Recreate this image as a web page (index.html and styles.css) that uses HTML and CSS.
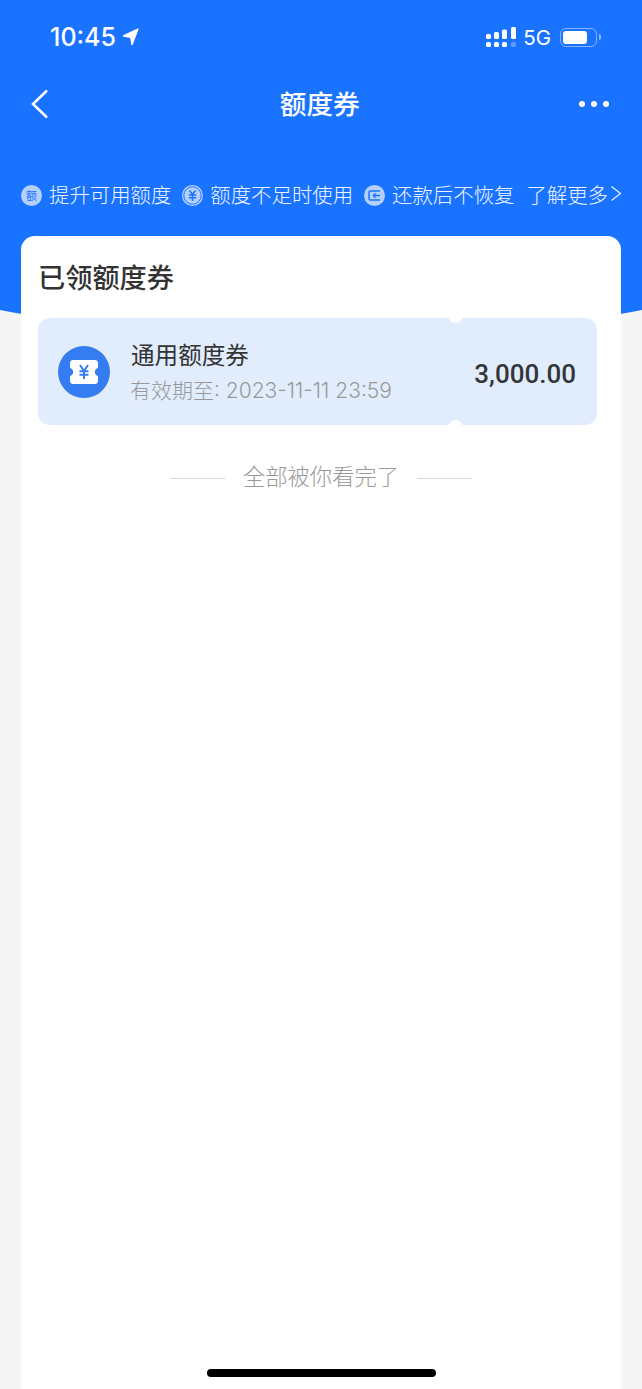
FILE: index.html
```html
<!DOCTYPE html>
<html lang="zh-CN">
<head>
    <meta charset="UTF-8">
    <meta name="viewport" content="width=device-width, initial-scale=1.0">
    <title>额度券</title>
    <link rel="stylesheet" href="styles.css">
</head>
<body>
    <div class="hero-bg"></div>
    <div class="page">
        <!-- Status bar -->
        <div class="status-bar">
            <div class="status-left">
                <span class="time">10:45</span>
                <svg class="loc" width="17" height="18" viewBox="0 0 17 18"><path d="M15.800 1.200 1.500 8 8.800 9.200 10 16.500z" fill="#fff" stroke="#fff" stroke-width="1.500" stroke-linejoin="round"/></svg>
            </div>
            <div class="status-right">
                <svg width="30" height="21" viewBox="0 0 30 21" fill="#fff">
                    <rect x="0" y="7" width="5" height="5" rx="1.500"/>
                    <rect x="8" y="5" width="5" height="7" rx="1.500"/>
                    <rect x="16" y="2.500" width="5" height="9.500" rx="1.500"/>
                    <rect x="25" y="0" width="5" height="12" rx="1.500"/>
                    <rect x="0" y="15" width="5" height="5" rx="1.500"/>
                    <rect x="8" y="15" width="5" height="5" rx="1.500"/>
                    <rect x="16" y="15" width="5" height="5" rx="1.500"/>
                    <rect x="25" y="15" width="5" height="5" rx="1.500" opacity=".3"/>
                </svg>
                <span class="net">5G</span>
                <div class="battery"><div class="battery-fill"></div></div>
                <div class="battery-nub"></div>
            </div>
        </div>

        <!-- Nav -->
        <div class="nav">
            <svg width="20" height="30" viewBox="0 0 20 30"><path d="M17 1.500 3 15l14 13.500" fill="none" stroke="#fff" stroke-width="2.500"/></svg>
            <h1>额度券</h1>
            <div class="dots"><i></i><i></i><i></i></div>
        </div>

        <!-- Tips -->
        <div class="tips">
            <span class="tip-icon tip-icon-text">额</span>
            <span class="tip">提升可用额度</span>
            <svg class="tip-icon" width="21" height="21" viewBox="0 0 21 21">
                <circle cx="10.500" cy="10.500" r="10.500" fill="#b5d1fb"/>
                <circle cx="10.500" cy="10.500" r="8.700" fill="none" stroke="#1a73ff" stroke-width="1"/>
                <path d="m7.500 5.500 3 4 3-4M6.800 10h7.400M6.800 12.700h7.400M10.500 9.500V16" fill="none" stroke="#1a73ff" stroke-width="1.500"/>
            </svg>
            <span class="tip">额度不足时使用</span>
            <svg class="tip-icon" width="21" height="21" viewBox="0 0 21 21">
                <circle cx="10.500" cy="10.500" r="10.500" fill="#b5d1fb"/>
                <path d="M16 6H6.500C5.700 6 5 6.700 5 7.500v6c0 .8.700 1.500 1.500 1.500H16" fill="none" stroke="#1a73ff" stroke-width="1.500"/>
                <path d="M16 10.500H9.500M11.500 8.300l-2.300 2.200 2.300 2.200" fill="none" stroke="#1a73ff" stroke-width="1.300"/>
            </svg>
            <span class="tip">还款后不恢复</span>
            <span class="tip more">了解更多</span>
            <svg class="more-arrow" width="12" height="17" viewBox="0 0 12 17"><path d="m1.500 1.500 9 7-9 7" fill="none" stroke="#e3eeff" stroke-width="1.300"/></svg>
        </div>

        <!-- Card -->
        <div class="card">
            <h2>已领额度券</h2>
            <div class="ticket">
                <div class="ticket-icon">
                    <svg width="28" height="24" viewBox="0 0 28 24">
                        <path d="M3 0h22c1.700 0 3 1.300 3 3v5c-2 .6-3.200 2.100-3.200 4s1.200 3.400 3.200 4v5c0 1.700-1.300 3-3 3H3c-1.700 0-3-1.300-3-3v-5c2-.6 3.200-2.100 3.200-4S2 8.600 0 8V3c0-1.700 1.300-3 3-3z" fill="#fff"/>
                        <path d="m10 5 4 6 4-6M9.500 11.200h9M9.500 14.700h9M14 11v8" fill="none" stroke="#357cf0" stroke-width="2"/>
                    </svg>
                </div>
                <div class="ticket-info">
                    <div class="ticket-name">通用额度券</div>
                    <div class="ticket-date">有效期至: 2023-11-11 23:59</div>
                </div>
                <div class="ticket-amount">3,000.00</div>
            </div>
            <div class="end-line">
                <span class="rule"></span>
                <span>全部被你看完了</span>
                <span class="rule"></span>
            </div>
        </div>
    </div>
    <div class="home-bar"></div>
</body>
</html>
```

FILE: styles.css
```css
html, body {
    height: 100%;
}
body {
    font-family: "Noto Sans CJK SC", "Noto Sans", sans-serif;
    margin: 0;
    background-color: #f5f5f5;
    color: #333;
    overflow: hidden;
    position: relative;
}
.hero-bg {
    position: absolute;
    top: 0;
    left: 0;
    width: 100%;
    height: 340px;
    background-color: #1a73ff;
    clip-path: ellipse(781px 340px at 50% 0);
}
.page {
    position: relative;
    display: flex;
    flex-direction: column;
    height: 100%;
}
.status-bar {
    height: 74px;
    display: flex;
    justify-content: space-between;
    align-items: center;
    padding: 0 45px 0 50px;
    color: #fff;
}
.status-left {
    display: flex;
    align-items: center;
    gap: 6px;
}
.time {
    font-family: Inter, sans-serif;
    font-size: 25px;
    font-weight: 500;
}
.status-right {
    display: flex;
    align-items: center;
}
.net {
    font-family: Inter, sans-serif;
    font-size: 20.500px;
    margin: 0 9px 0 7px;
}
.battery {
    width: 37px;
    height: 19px;
    box-sizing: border-box;
    border: 1.500px solid rgba(255, 255, 255, 0.45);
    border-radius: 6px;
    padding: 2px;
}
.battery-fill {
    width: 24px;
    height: 100%;
    background-color: #fff;
    border-radius: 3px;
}
.battery-nub {
    width: 2px;
    height: 6px;
    margin-left: 2px;
    margin-right: -4px;
    background-color: rgba(255, 255, 255, 0.5);
    border-radius: 0 2px 2px 0;
}
.nav {
    height: 60px;
    display: flex;
    justify-content: space-between;
    align-items: center;
    padding: 0 33px 0 30px;
}
.nav h1 {
    margin: 0 0 4px 11px;
    font-size: 26.700px;
    font-weight: 500;
    color: #fff;
    flex: 1;
    text-align: center;
}
.dots {
    display: flex;
    gap: 5.500px;
}
.dots i {
    width: 6.500px;
    height: 6.500px;
    border-radius: 50%;
    background-color: #fff;
}
.tips {
    height: 102px;
    box-sizing: border-box;
    padding: 45px 0 0 21px;
    display: flex;
    align-items: flex-start;
    color: #f0f6ff;
}
.tip {
    font-size: 20.400px;
    line-height: 30px;
    font-weight: 300;
    margin: 0 11px 0 7px;
    white-space: nowrap;
}
.tip.more {
    margin: 0 2px 0 1px;
}
.tips svg {
    flex: none;
    margin-top: 6px;
}
.tip-icon {
    flex: none;
    width: 21px;
    height: 21px;
}
.tip-icon-text {
    border-radius: 50%;
    background-color: #b5d1fb;
    color: #1a73ff;
    font-size: 11px;
    line-height: 21px;
    text-align: center;
    margin-top: 6px;
}
.card {
    flex: 1;
    margin: 0 21px;
    padding: 0 24px 0 17px;
    background-color: #fff;
    border-radius: 14px 14px 0 0;
}
.card h2 {
    margin: 19px 0 21px 0;
    font-size: 27.200px;
    line-height: 42px;
    font-weight: 500;
    color: #333;
}
.ticket {
    position: relative;
    height: 107px;
    display: flex;
    align-items: center;
    padding: 0 21px 0 20px;
    background-color: #e1edfd;
    border-radius: 12px;
}
.ticket::before, .ticket::after {
    content: "";
    position: absolute;
    left: 410px;
    width: 15px;
    height: 15px;
    border-radius: 50%;
    background-color: #fff;
}
.ticket::before {
    top: -10px;
}
.ticket::after {
    bottom: -10px;
}
.ticket-icon {
    flex: none;
    width: 52px;
    height: 52px;
    border-radius: 50%;
    background-color: #357cf0;
    display: flex;
    align-items: center;
    justify-content: center;
}
.ticket-info {
    flex: 1;
    margin-left: 21px;
    padding-top: 2px;
}
.ticket-name {
    font-size: 23.600px;
    line-height: 34px;
    color: #333;
}
.ticket-date {
    font-family: Inter, "Noto Sans CJK SC", sans-serif;
    font-size: 21px;
    line-height: 34px;
    font-weight: 300;
    color: #999;
    margin-top: 3px;
    margin-left: -1px;
    white-space: nowrap;
}
.ticket-amount {
    font-family: Roboto, sans-serif;
    font-size: 26px;
    font-weight: 500;
    color: #32363b;
    padding-top: 4px;
}
.end-line {
    display: flex;
    justify-content: center;
    align-items: center;
    gap: 18px;
    margin-top: 33px;
    margin-left: 7px;
    font-size: 22.300px;
    line-height: 34px;
    font-weight: 300;
    color: #999;
}
.rule {
    width: 55px;
    height: 1px;
    margin-top: 6px;
    background-color: #d8d8d8;
}
.home-bar {
    position: absolute;
    left: 207px;
    bottom: 12px;
    width: 229px;
    height: 8px;
    border-radius: 4px;
    background-color: #000;
}
```
